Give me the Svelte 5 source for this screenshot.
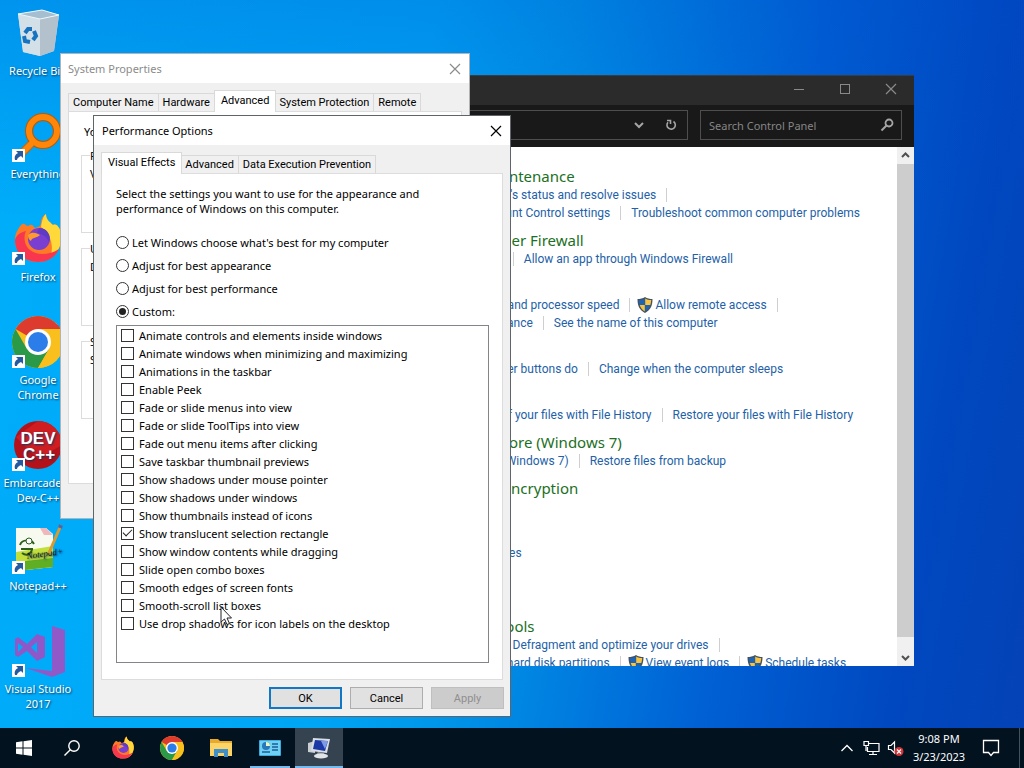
<script>
	let searchText = $state('');
	let visualMode = $state('custom');

	const modes = [
		{ id: 'auto', label: "Let Windows choose what's best for my computer" },
		{ id: 'appearance', label: 'Adjust for best appearance' },
		{ id: 'performance', label: 'Adjust for best performance' },
		{ id: 'custom', label: 'Custom:' }
	];

	let effects = $state([
		{ label: 'Animate controls and elements inside windows', on: false },
		{ label: 'Animate windows when minimizing and maximizing', on: false },
		{ label: 'Animations in the taskbar', on: false },
		{ label: 'Enable Peek', on: false },
		{ label: 'Fade or slide menus into view', on: false },
		{ label: 'Fade or slide ToolTips into view', on: false },
		{ label: 'Fade out menu items after clicking', on: false },
		{ label: 'Save taskbar thumbnail previews', on: false },
		{ label: 'Show shadows under mouse pointer', on: false },
		{ label: 'Show shadows under windows', on: false },
		{ label: 'Show thumbnails instead of icons', on: false },
		{ label: 'Show translucent selection rectangle', on: true },
		{ label: 'Show window contents while dragging', on: false },
		{ label: 'Slide open combo boxes', on: false },
		{ label: 'Smooth edges of screen fonts', on: false },
		{ label: 'Smooth-scroll list boxes', on: false },
		{ label: 'Use drop shadows for icon labels on the desktop', on: false }
	]);

	const shortcuts = [
		{ icon: 'bin', label: 'Recycle Bin' },
		{ icon: 'everything', label: 'Everything' },
		{ icon: 'firefox', label: 'Firefox' },
		{ icon: 'chrome', label: 'Google Chrome' },
		{ icon: 'devcpp', label: 'Embarcadero Dev-C++' },
		{ icon: 'notepad', label: 'Notepad++' },
		{ icon: 'vs', label: 'Visual Studio 2017' }
	];

	const systemTabs = ['Computer Name', 'Hardware', 'Advanced', 'System Protection', 'Remote'];
	const perfTabs = ['Visual Effects', 'Advanced', 'Data Execution Prevention'];

	const systemGroups = [
		{ title: 'Performance', text: 'Visual effects, processor scheduling, memory usage, and virtual memory' },
		{ title: 'User Profiles', text: 'Desktop settings related to your sign-in' },
		{ title: 'Startup and Recovery', text: 'System startup, system failure, and debugging information' }
	];

	// more: keeps the separator after the last link of a line
	const categories = [
		{
			title: 'Security and Maintenance',
			lines: [
				{ links: [{ text: "Review your computer's status and resolve issues" }], more: true },
				{ links: [{ text: 'Change User Account Control settings', shield: true }, { text: 'Troubleshoot common computer problems' }] }
			]
		},
		{
			title: 'Windows Defender Firewall',
			lines: [{ links: [{ text: 'Check firewall status' }, { text: 'Allow an app through Windows Firewall' }] }]
		},
		{
			title: 'System',
			lines: [
				{ links: [{ text: 'View amount of RAM and processor speed' }, { text: 'Allow remote access', shield: true }], more: true },
				{ links: [{ text: 'Launch remote assistance' }, { text: 'See the name of this computer' }] }
			]
		},
		{
			title: 'Power Options',
			lines: [{ links: [{ text: 'Change what the power buttons do' }, { text: 'Change when the computer sleeps' }] }]
		},
		{
			title: 'File History',
			lines: [{ links: [{ text: 'Save backup copies of your files with File History' }, { text: 'Restore your files with File History' }] }]
		},
		{
			title: 'Backup and Restore (Windows 7)',
			lines: [{ links: [{ text: 'Backup and Restore (Windows 7)' }, { text: 'Restore files from backup' }] }]
		},
		{ title: 'BitLocker Drive Encryption', lines: [{ links: [{ text: 'Manage BitLocker' }] }] },
		{ title: 'Storage Spaces', lines: [{ links: [{ text: 'Manage Storage Spaces' }] }] },
		{ title: 'Work Folders', lines: [{ links: [{ text: 'Manage Work Folders' }] }] },
		{
			title: 'Administrative Tools',
			lines: [
				{ links: [{ text: 'Free up disk space' }, { text: 'Defragment and optimize your drives' }], more: true },
				{ links: [{ text: 'Create and format hard disk partitions', shield: true }, { text: 'View event logs', shield: true }, { text: 'Schedule tasks', shield: true }] }
			]
		}
	];
</script>

{#snippet chromeLogo()}
	<circle cx="26" cy="26" r="26" fill="#f9bf1c" />
	<path d="M26 26 L3.5 13 A26 26 0 0 1 48.5 13 Z" fill="#de3b2f" />
	<path d="M26 13 H48.5 L46 9 L30 4 Z" fill="#de3b2f" />
	<path d="M3.5 13 A26 26 0 0 0 26 52 L37.3 32.5 L26 26 L14.7 32.5 Z" fill="#2b9a48" />
	<path d="M26 13 H48.5 A26 26 0 0 1 26 52 L37.3 32.5 Z" fill="#f9bf1c" />
	<circle cx="26" cy="26" r="13" fill="#fff" />
	<circle cx="26" cy="26" r="10" fill="#2b7de9" />
{/snippet}

{#snippet firefoxLogo()}
	<path d="M9 12 C12 9 13 12 16 13 C20 10 21 13 23 15 C27 14 29 13 29 9 C29 5 32 2 34 1 C34 7 38 9 41 12 C46 9 51 20 49 29 C47 42 37 49 26 49 C12 49 3 39 3 27 C3 20 6 16 9 12 Z" fill="#ff7a24" />
	<path d="M34 1 C34 7 38 9 41 12 C46 9 51 20 49 29 C47 38 42 43 38 45 C42 35 40 22 29 14 C30 8 31 3 34 1 Z" fill="#ffd83a" />
	<path d="M3 27 C3 41 14 49 26 49 C37 49 44 43 47 36 C38 42 25 43 18 37 C11 31 12 22 14 18 C9 19 4 22 3 27 Z" fill="#f8364f" />
	<circle cx="27" cy="26" r="11" fill="#7a3fd0" />
	<path d="M16 22 C20 18 25 20 28 22 C25 25 20 24 19 28 C17 27 16 25 16 22 Z" fill="#ff9a2c" />
	<path d="M27 15 C35 15 39 22 37 29 C35 24 31 21 25 20 Z" fill="#5d3bc4" />
{/snippet}

{#snippet shield()}
	<svg class="shield" viewBox="0 0 16 16" aria-hidden="true">
		<path d="M8 0 C10 1.500 13 2 15.500 2 C15.500 9 13.500 13 8 16 C2.500 13 .5 9 .5 2 C3 2 6 1.500 8 0 Z" fill="#44525f" />
		<path d="M7.800 1.500 C6 2.600 4 3 1.800 3 C1.900 5 2.200 6.500 2.700 8 H7.800 Z" fill="#1d64b4" />
		<path d="M8.200 1.500 C10 2.600 12 3 14.200 3 C14.100 5 13.800 6.500 13.300 8 H8.200 Z" fill="#f6c344" />
		<path d="M7.800 8 H2.700 C3.700 11 5.200 13 7.800 14.600 Z" fill="#f6c344" />
		<path d="M8.200 8 H13.300 C12.300 11 10.800 13 8.200 14.600 Z" fill="#1d64b4" />
	</svg>
{/snippet}

{#snippet closeMark()}
	<svg width="12" height="12" viewBox="0 0 12 12" aria-hidden="true">
		<path d="M1 1 L11 11 M11 1 L1 11" stroke="currentColor" stroke-width="1.200" />
	</svg>
{/snippet}

<div class="screen">
	<main class="desktop">
		<nav class="shortcuts" aria-label="Desktop">
			{#each shortcuts as item (item.icon)}
				<button class="shortcut">
					<svg width="52" height="52" viewBox="0 0 52 52" aria-hidden="true">
						{#if item.icon === 'bin'}
							<path d="M6 7 L30 3 L47 8 L42 44 L28 49 L11 45 Z" fill="#c9d9e4" />
							<path d="M6 7 L28 12 L28 49 L11 45 Z" fill="#d3e0e8" />
							<path d="M28 12 L47 8 L42 44 L28 49 Z" fill="#b3c1cc" />
							<path d="M6 7 L30 3 L47 8 L28 12 Z" fill="#a5bfd0" stroke="#eef6fa" stroke-width="1" />
							<g fill="none" stroke="#1573bf" stroke-width="4">
								<path d="M13 26 L16 22 H20" />
								<path d="M22 24 L24 29 L21 33" />
								<path d="M18 35 L13 34 L12 29" />
							</g>
						{:else if item.icon === 'everything'}
							<path d="M20 33 L7 46" stroke="#c96608" stroke-width="8" />
							<circle cx="31" cy="21" r="14" fill="none" stroke="#b55b06" stroke-width="8" />
							<circle cx="31" cy="21" r="14" fill="none" stroke="#ff8608" stroke-width="6" />
							<path d="M20 33 L7 46" stroke="#ff8608" stroke-width="6" />
						{:else if item.icon === 'firefox'}
							{@render firefoxLogo()}
						{:else if item.icon === 'chrome'}
							{@render chromeLogo()}
						{:else if item.icon === 'devcpp'}
							<circle cx="26" cy="26" r="24" fill="#b3121a" />
							<path d="M26 2 A24 24 0 0 1 50 26 L26 40 L4 18 Z" fill="#cf1d22" />
							<text x="26" y="25" text-anchor="middle" class="logo-text">DEV</text>
							<text x="27" y="41" text-anchor="middle" class="logo-text">C++</text>
						{:else if item.icon === 'notepad'}
							<path d="M4 6 H34 L41 12 V45 L4 49 Z" fill="#f7fbef" />
							<path d="M4 30 L41 24 V45 L4 49 Z" fill="#c3df3c" />
							<path d="M4 40 L41 36 V45 L4 49 Z" fill="#5fae24" />
							<path d="M28 6 L32 13 H41 L34 6 Z" fill="#f1b8bc" />
							<path d="M8 23 C10 17 19 17 22 22 M9 27 H21 M10 31 C14 34 18 33 20 28" fill="none" stroke="#2c5e1e" stroke-width="2" />
							<circle cx="17" cy="19" r="3" fill="#fff" stroke="#2c5e1e" />
							<text x="15" y="37" class="script-text" transform="rotate(-8 15 37)">Notepad+</text>
							<path d="M49 3 L37 31" stroke="#d99a30" stroke-width="3" />
							<path d="M49 3 L48 6" stroke="#5366a0" stroke-width="4" />
						{:else}
							<path d="M40 1 L53 5 V47 L40 52 L14 43 L40 46 Z" fill="#9159c8" />
							<path fill-rule="evenodd" d="M3 14 L6 12 L15 19 L25 9 L33 12 V32 L25 36 L15 26 L6 32 L3 30 Z M6 18 V27 L11 22 Z M25 17 V28 L19 22 Z" fill="#8f58c8" />
						{/if}
						{#if item.icon !== 'bin'}
							<rect x="0" y="39" width="13" height="13" fill="#fff" />
							<path d="M3 50 C2 46 4 44 6 43 L4 41 H11 V48 L9 46 C7 47 5 48 5 50 Z" fill="#245a9f" />
						{/if}
					</svg>
					<span>{item.label}</span>
				</button>
			{/each}
		</nav>

		<section class="window control-panel" aria-label="Control Panel">
			<header class="dark-title">
				<button aria-label="Minimize">
					<svg width="12" height="12" viewBox="0 0 12 12"><path d="M1 6.500 H11" stroke="currentColor" /></svg>
				</button>
				<button aria-label="Maximize">
					<svg width="12" height="12" viewBox="0 0 12 12"><rect x="1.500" y="1.500" width="9" height="9" fill="none" stroke="currentColor" /></svg>
				</button>
				<button aria-label="Close">{@render closeMark()}</button>
			</header>
			<div class="toolbar">
				<div class="address">
					<button aria-label="Previous locations">
						<svg width="12" height="12" viewBox="0 0 12 12"><path d="M2 4 L6 8 L10 4" fill="none" stroke="currentColor" stroke-width="2" /></svg>
					</button>
					<button aria-label="Refresh">
						<svg width="12" height="12" viewBox="0 0 12 12"><path d="M8.500 2.500 A4.200 4.200 0 1 1 3 3.200 M2 1.500 H5.500 V5" fill="none" stroke="currentColor" stroke-width="1.600" /></svg>
					</button>
				</div>
				<div class="search">
					<input type="text" placeholder="Search Control Panel" aria-label="Search Control Panel" bind:value={searchText} />
					<svg width="14" height="14" viewBox="0 0 14 14" aria-hidden="true">
						<circle cx="9" cy="5" r="3.500" fill="none" stroke="currentColor" stroke-width="1.800" />
						<path d="M6.500 7.500 L1.500 12.500" stroke="currentColor" stroke-width="2" />
					</svg>
				</div>
			</div>
			<div class="panel-body">
				<div class="categories">
					{#each categories as category (category.title)}
						<section>
							<h2>{category.title}</h2>
							{#each category.lines as line}
								<div class="link-line">
									{#each line.links as link, i}
										{#if i > 0}<i class="bar"></i>{/if}
										{#if link.shield}{@render shield()}{/if}
										<a href="#task">{link.text}</a>
									{/each}
									{#if line.more}<i class="bar"></i>{/if}
								</div>
							{/each}
						</section>
					{/each}
				</div>
				<div class="scrollbar">
					<button aria-label="Scroll up">
						<svg width="9" height="9" viewBox="0 0 9 9"><path d="M1 6 L4.500 2.500 L8 6" fill="none" stroke="#505050" stroke-width="2" /></svg>
					</button>
					<div class="thumb"></div>
					<button aria-label="Scroll down">
						<svg width="9" height="9" viewBox="0 0 9 9"><path d="M1 3 L4.500 6.500 L8 3" fill="none" stroke="#505050" stroke-width="2" /></svg>
					</button>
				</div>
			</div>
		</section>

		<section class="window dialog system" aria-label="System Properties">
			<header class="title">
				<h1>System Properties</h1>
				<button aria-label="Close">{@render closeMark()}</button>
			</header>
			<div class="dialog-body">
				<div class="tabs">
					{#each systemTabs as tab, i}
						<button class:active={i === 2}>{tab}</button>
					{/each}
				</div>
				<div class="page">
					<p>You must be logged on as an Administrator to make most of these changes.</p>
					{#each systemGroups as group (group.title)}
						<fieldset>
							<legend>{group.title}</legend>
							{group.text}
						</fieldset>
					{/each}
				</div>
			</div>
		</section>

		<section class="window dialog performance" aria-label="Performance Options">
			<header class="title">
				<h1>Performance Options</h1>
				<button aria-label="Close">{@render closeMark()}</button>
			</header>
			<div class="dialog-body">
				<div class="tabs">
					{#each perfTabs as tab, i}
						<button class:active={i === 0}>{tab}</button>
					{/each}
				</div>
				<div class="page">
					<p>Select the settings you want to use for the appearance and performance of Windows on this computer.</p>
					<div class="modes">
						{#each modes as mode (mode.id)}
							<label>
								<input type="radio" name="visual-mode" value={mode.id} bind:group={visualMode} />
								{mode.label}
							</label>
						{/each}
					</div>
					<div class="effects">
						{#each effects as effect (effect.label)}
							<label>
								<input type="checkbox" bind:checked={effect.on} />
								{effect.label}
							</label>
						{/each}
					</div>
				</div>
				<footer>
					<button class="default">OK</button>
					<button>Cancel</button>
					<button disabled>Apply</button>
				</footer>
			</div>
		</section>

		<svg class="cursor" width="13" height="20" viewBox="0 0 13 20" aria-hidden="true">
			<path d="M1 1 V16 L4.500 13 L7 18.500 L9.500 17.500 L7 12 H11.500 Z" fill="#fff" stroke="#222" />
		</svg>
	</main>

	<footer class="taskbar">
		<button aria-label="Start">
			<svg width="16" height="16" viewBox="0 0 16 16"><path d="M0 2.200 L6.500 1.300 V7.500 H0 Z M7.500 1.200 L16 0 V7.500 H7.500 Z M0 8.500 H6.500 V14.700 L0 13.800 Z M7.500 8.500 H16 V16 L7.500 14.800 Z" fill="#fff" /></svg>
		</button>
		<button aria-label="Search">
			<svg width="16" height="16" viewBox="0 0 16 16"><circle cx="10" cy="6" r="5.200" fill="none" stroke="#fff" stroke-width="1.400" /><path d="M6.300 9.700 L.5 15.500" stroke="#fff" stroke-width="1.400" /></svg>
		</button>
		<div class="apps">
			<button aria-label="Firefox">
				<svg width="24" height="24" viewBox="0 0 52 52">{@render firefoxLogo()}</svg>
			</button>
			<button aria-label="Google Chrome">
				<svg width="24" height="24" viewBox="0 0 52 52">{@render chromeLogo()}</svg>
			</button>
			<button aria-label="File Explorer">
				<svg width="22" height="20" viewBox="0 0 22 20">
					<path d="M0 1 H8 L10 3 H22 V18 H0 Z" fill="#e9a92c" />
					<path d="M0 5 H22 V18 H0 Z" fill="#fcd366" />
					<path d="M4 19 V11 H18 V19 H14 V15 H8 V19 Z" fill="#3f8fc9" />
				</svg>
			</button>
			<button aria-label="Control Panel" class="open">
				<svg width="22" height="16" viewBox="0 0 22 16">
					<rect width="22" height="16" rx="1" fill="#38aee0" />
					<rect x="1" y="1" width="20" height="14" fill="#6fd0f2" />
					<circle cx="7" cy="6" r="4" fill="#2878bb" />
					<path d="M7 6 V2 A4 4 0 0 1 11 6 Z" fill="#e9f7c3" />
					<path d="M13 4 H19 M13 7 H19 M13 10 H19 M3 12 H11" stroke="#1a5e9c" stroke-width="1.500" />
				</svg>
			</button>
			<button aria-label="System Properties" class="current">
				<svg width="24" height="24" viewBox="0 0 24 24">
					<path d="M1 7 L8 5 V17 L1 16 Z" fill="#c9ced3" />
					<path d="M6 2 L23 3 L20 17 L4 15 Z" fill="#d9dee2" />
					<path d="M8 4 L21 5 L18 15 L6 13 Z" fill="#1a39a7" />
					<path d="M14 5 L21 5 L18 13 Z" fill="#7d9ae8" />
					<path d="M11 16 L17 17 L18 20 L9 19 Z" fill="#8d969e" />
					<ellipse cx="14" cy="20" rx="7" ry="2.500" fill="#e1e5e8" />
				</svg>
			</button>
		</div>
		<div class="tray">
			<button aria-label="Show hidden icons">
				<svg width="14" height="14" viewBox="0 0 14 14"><path d="M1.500 10 L7 4.500 L12.500 10" fill="none" stroke="#fff" stroke-width="1.300" /></svg>
			</button>
			<button aria-label="Network">
				<svg width="17" height="16" viewBox="0 0 17 16"><path d="M5 3.500 H16 V11.500 H4.500 V7 M10 12 V14.500 M6 14.500 H14 M1 1.500 H5.500 V5.500 H1 Z M3 6 V11" fill="none" stroke="#fff" stroke-width="1.200" /></svg>
			</button>
			<button aria-label="Volume, muted">
				<svg width="17" height="16" viewBox="0 0 17 16">
					<path d="M1.500 5.500 H4 L7.500 2 V13 L4 9.500 H1.500 Z" fill="none" stroke="#fff" stroke-width="1.200" />
					<circle cx="12" cy="11.500" r="4.500" fill="#d13438" />
					<path d="M10 9.500 L14 13.500 M14 9.500 L10 13.500" stroke="#fff" stroke-width="1.200" />
				</svg>
			</button>
			<div class="clock"><time>9:08 PM</time><time>3/23/2023</time></div>
			<button aria-label="Notifications" class="notify">
				<svg width="18" height="18" viewBox="0 0 18 18"><path d="M1.500 1.500 H16.500 V13.500 H11.500 L9 16.500 L6.500 13.500 H1.500 Z" fill="none" stroke="#fff" stroke-width="1.300" /></svg>
			</button>
		</div>
	</footer>
</div>

<style>
	:global(body) {
		margin: 0;
	}

	.screen {
		display: flex;
		flex-direction: column;
		height: 100vh;
		overflow: hidden;
		font-family: 'Noto Sans', 'Open Sans', sans-serif;
		font-size: 11px;
		color: #000;
	}

	button {
		font: inherit;
		color: inherit;
		background: none;
		border: none;
		padding: 0;
		margin: 0;
	}

	h1, h2, p {
		margin: 0;
		font-weight: 400;
	}

	svg {
		display: block;
		flex: none;
	}

	.desktop {
		position: relative;
		flex: 1;
		background:
			linear-gradient(to bottom, rgba(0, 70, 200, 0.25), rgba(0, 70, 200, 0) 30%),
			linear-gradient(100deg, #00aefa 0%, #00a6f6 38%, #0094e8 50%, #0060d4 72%, #0048c0 88%, #0442b6 100%);
	}

	.shortcuts {
		width: 76px;
	}

	.shortcut {
		display: flex;
		flex-direction: column;
		align-items: center;
		gap: 4px;
		width: 100%;
		height: 103px;
		padding-top: 7px;
		box-sizing: border-box;
		line-height: 15px;
		color: #fff;
		text-shadow: 1px 1px 2px #003a66;
	}

	.shortcut svg {
		overflow: visible;
	}

	.logo-text {
		font: bold 17px 'Liberation Sans', sans-serif;
		fill: #fff;
	}

	.script-text {
		font: italic 9px 'Liberation Serif', serif;
		fill: #111;
	}

	.window {
		position: absolute;
		display: flex;
		flex-direction: column;
		box-sizing: border-box;
	}

	/* control panel */
	.control-panel {
		left: 200px;
		right: 110px;
		top: 75px;
		bottom: 62px;
		background: #fff;
		border-top: 1px solid #3c3c3c;
	}

	.dark-title {
		display: flex;
		justify-content: flex-end;
		height: 29px;
		background: #2b2b2b;
		color: #8a8a8a;
	}

	.dark-title button {
		display: grid;
		place-items: center;
		width: 46px;
		padding-bottom: 3px;
	}

	.toolbar {
		display: flex;
		gap: 12px;
		padding: 5px 12px 7px;
		background: #191919;
		color: #a5a5a5;
	}

	.address,
	.search {
		display: flex;
		align-items: center;
		height: 28px;
		border: 1px solid #4e4e4e;
	}

	.address {
		flex: 1;
		justify-content: flex-end;
	}

	.address button {
		display: grid;
		place-items: center;
		width: 32px;
		height: 100%;
	}

	.search {
		flex: 0 0 202px;
		height: 30px;
		padding: 0 7px 0 8px;
		box-sizing: border-box;
	}

	.search input {
		flex: 1;
		min-width: 0;
		padding: 0;
		border: none;
		outline: none;
		background: none;
		font: inherit;
		color: #ddd;
	}

	.search input::placeholder {
		color: #868686;
		opacity: 1;
	}

	.panel-body {
		display: flex;
		flex: 1;
		min-height: 0;
	}

	.categories {
		display: flex;
		flex-direction: column;
		gap: 8px;
		flex: 1;
		padding: 19px 0 0 192px;
		overflow: hidden;
		white-space: nowrap;
	}

	h2 {
		font-size: 15px;
		line-height: 20px;
		color: #1c6f24;
	}

	.link-line {
		display: flex;
		align-items: center;
		height: 18px;
		font-family: Roboto, 'Noto Sans', sans-serif;
		font-size: 12px;
		line-height: 18px;
	}

	.link-line a {
		color: #245fa8;
		text-decoration: none;
	}

	.bar {
		width: 1px;
		height: 14px;
		margin: 0 10px;
		background: #cfcfcf;
	}

	.shield {
		width: 16px;
		height: 16px;
		margin: 0 2px 0 -3px;
	}

	.scrollbar {
		display: flex;
		flex-direction: column;
		width: 17px;
		background: #f0f0f0;
	}

	.scrollbar button {
		display: grid;
		place-items: center;
		height: 17px;
	}

	.thumb {
		flex: 1;
		margin-bottom: 12px;
		background: #cdcdcd;
	}

	/* dialogs */
	.dialog {
		background: #f0f0f0;
		border: 1px solid #5f6468;
	}

	.title {
		display: flex;
		justify-content: space-between;
		align-items: center;
		height: 29px;
		padding: 0 8px;
		background: #fff;
	}

	.title h1 {
		font-size: 11px;
		line-height: 16px;
	}

	.dialog-body {
		display: flex;
		flex-direction: column;
		flex: 1;
		padding: 7px 7px 0;
	}

	.tabs {
		display: flex;
		align-items: flex-end;
		height: 21px;
		font-family: Roboto, 'Noto Sans', sans-serif;
	}

	.tabs button {
		height: 18px;
		padding: 0 4px;
		border: 1px solid #d9d9d9;
		border-bottom: none;
		border-left-width: 0;
		line-height: 17px;
		white-space: nowrap;
	}

	.tabs button:first-child {
		border-left-width: 1px;
	}

	.tabs button.active {
		position: relative;
		height: 22px;
		margin: 0 -1px -1px;
		padding: 0 6px 2px;
		border-left-width: 1px;
		background: #fff;
	}

	.tabs button.active:first-child {
		margin-left: 0;
	}

	.page {
		padding: 12px 13px 16px 14px;
		border: 1px solid #dcdcdc;
		background: #fff;
	}

	.system {
		left: 60px;
		top: 53px;
		width: 410px;
		height: 466px;
		border-color: #b0b4b8;
	}

	.system .title {
		padding-left: 7px;
		color: #8b8b8b;
	}

	.system .page {
		height: 343px;
		padding-left: 12px;
	}

	.system .page p {
		padding: 0 3px 8px;
		line-height: 16px;
		white-space: nowrap;
		overflow: hidden;
	}

	fieldset {
		height: 85px;
		margin: 0 0 8px;
		padding: 3px 8px;
		box-sizing: border-box;
		border: 1px solid #dcdcdc;
		line-height: 15px;
		white-space: nowrap;
		overflow: hidden;
	}

	legend {
		padding: 0;
	}

	.performance {
		left: 93px;
		top: 115px;
		width: 418px;
	}

	.performance .page p {
		padding-right: 48px;
		line-height: 15px;
	}

	.modes {
		display: flex;
		flex-direction: column;
		padding: 15px 0 2px;
	}

	.modes label {
		display: flex;
		align-items: center;
		gap: 3px;
		height: 23px;
	}

	.modes input,
	.effects input {
		appearance: none;
		display: grid;
		place-items: center;
		width: 13px;
		height: 13px;
		margin: 0;
		border: 1px solid #333;
		background: #fff;
	}

	.modes input {
		border-radius: 50%;
	}

	.modes input:checked::before {
		content: '';
		width: 7px;
		height: 7px;
		border-radius: 50%;
		background: #222;
	}

	.effects {
		padding: 0 4px 30px;
		border: 1px solid #82858a;
	}

	.effects label {
		display: flex;
		align-items: center;
		gap: 5px;
		height: 18px;
	}

	.effects input:checked::before {
		content: '';
		width: 8px;
		height: 4px;
		margin-bottom: 3px;
		border: solid #222;
		border-width: 0 0 1px 1px;
		transform: rotate(-45deg);
	}

	.dialog footer {
		display: flex;
		justify-content: flex-end;
		gap: 8px;
		margin-right: -1px;
		padding: 7px 0 7px;
		font-family: Roboto, 'Noto Sans', sans-serif;
	}

	.dialog footer button {
		width: 73px;
		height: 22px;
		border: 1px solid #adadad;
		background: #e1e1e1;
	}

	.dialog footer button.default {
		border: 2px solid #1277c4;
	}

	.dialog footer button:disabled {
		border-color: #bfbfbf;
		background: #cccccc;
		color: #8f8f8f;
	}

	.cursor {
		position: absolute;
		left: 220px;
		top: 606px;
	}

	/* taskbar */
	.taskbar {
		display: flex;
		height: 40px;
		background: #03121f;
		color: #fff;
	}

	.taskbar button {
		display: grid;
		place-items: center;
		width: 48px;
		height: 100%;
		box-sizing: border-box;
	}

	.apps {
		display: flex;
		gap: 1px;
		padding-left: 3px;
	}

	.apps .open {
		background: linear-gradient(#76b9ed, #76b9ed) center bottom / 40px 2px no-repeat;
	}

	.apps .current {
		background: #34434f;
		box-shadow: inset 0 -2px #76b9ed;
	}

	.tray {
		display: flex;
		align-items: center;
		margin-left: auto;
		margin-right: 4px;
		border-right: 1px solid #45515b;
	}

	.tray button {
		width: 24px;
	}

	.clock {
		display: flex;
		flex-direction: column;
		align-items: center;
		width: 64px;
		font-size: 11px;
		line-height: 18px;
	}

	.tray .notify {
		width: 40px;
		margin-right: 8px;
	}
</style>
